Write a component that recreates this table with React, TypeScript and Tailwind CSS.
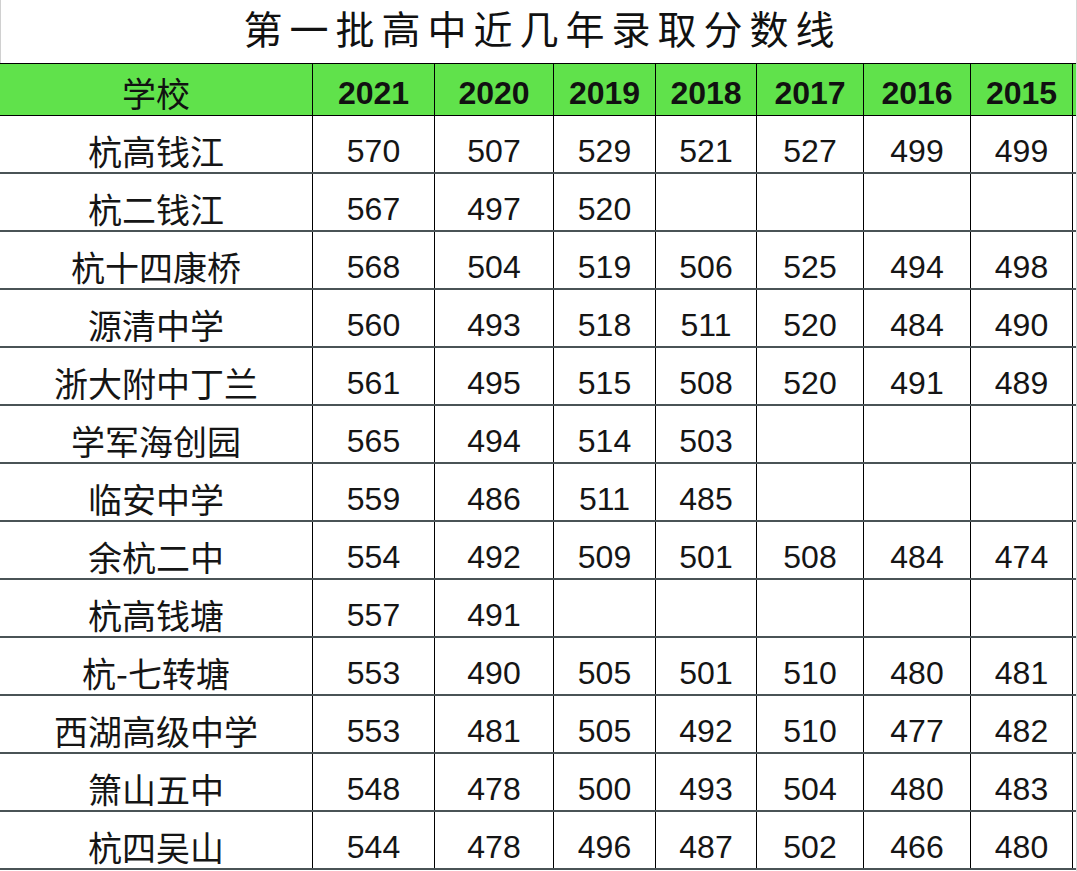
const cols = ['w-[313px]', 'w-[122px]', 'w-[119px]', 'w-[102px]', 'w-[101px]', 'w-[107px]', 'w-[107px]', 'w-[102px]'];

const years = ['2021', '2020', '2019', '2018', '2017', '2016', '2015'];

const rows: [string, string[]][] = [
  ['杭高钱江', ['570', '507', '529', '521', '527', '499', '499']],
  ['杭二钱江', ['567', '497', '520', '', '', '', '']],
  ['杭十四康桥', ['568', '504', '519', '506', '525', '494', '498']],
  ['源清中学', ['560', '493', '518', '511', '520', '484', '490']],
  ['浙大附中丁兰', ['561', '495', '515', '508', '520', '491', '489']],
  ['学军海创园', ['565', '494', '514', '503', '', '', '']],
  ['临安中学', ['559', '486', '511', '485', '', '', '']],
  ['余杭二中', ['554', '492', '509', '501', '508', '484', '474']],
  ['杭高钱塘', ['557', '491', '', '', '', '', '']],
  ['杭-七转塘', ['553', '490', '505', '501', '510', '480', '481']],
  ['西湖高级中学', ['553', '481', '505', '492', '510', '477', '482']],
  ['箫山五中', ['548', '478', '500', '493', '504', '480', '483']],
  ['杭四吴山', ['544', '478', '496', '487', '502', '466', '480']],
];

function App() {
  return (
    <div className="w-[1077px] h-[871px] overflow-hidden bg-white border-r border-[#d6d6d6]">
      {/* title */}
      <div className="h-[63px] flex items-center justify-center border-l border-[#d0d0d0] pl-[8px] pb-[9px] font-['Noto_Sans_CJK_SC',serif] text-[39px] font-normal leading-none tracking-[7px] text-[#111]">
        第一批高中近几年录取分数线
      </div>

      {/* header */}
      <div className="flex h-[53px] bg-[#60e24b] border-t border-b border-black text-[#111]">
        <div className={`${cols[0]} shrink-0 flex items-center justify-center border-r border-black pt-[7px] font-['Noto_Sans_CJK_SC',sans-serif] text-[34px] leading-none`}>
          学校
        </div>
        {years.map((y, i) => (
          <div
            key={y}
            className={`${cols[i + 1]} shrink-0 flex items-center justify-center border-r border-black pt-[7px] font-['Liberation_Sans',Arial,sans-serif] text-[32px] font-bold leading-none`}
          >
            {y}
          </div>
        ))}
      </div>

      {/* body */}
      {rows.map(([name, vals]) => (
        <div key={name} className="flex h-[58px] border-b-2 border-[#4a5356] text-[#151515]">
          <div className={`${cols[0]} shrink-0 flex items-center justify-center border-r border-black pt-[13px] font-['Noto_Sans_CJK_SC',sans-serif] text-[34px] leading-none`}>
            {name}
          </div>
          {vals.map((v, i) => (
            <div
              key={i}
              className={`${cols[i + 1]} shrink-0 flex items-center justify-center border-r border-black pt-[13px] font-['Liberation_Sans',Arial,sans-serif] text-[32px] leading-none`}
            >
              {v}
            </div>
          ))}
        </div>
      ))}
    </div>
  );
}

export default App;
